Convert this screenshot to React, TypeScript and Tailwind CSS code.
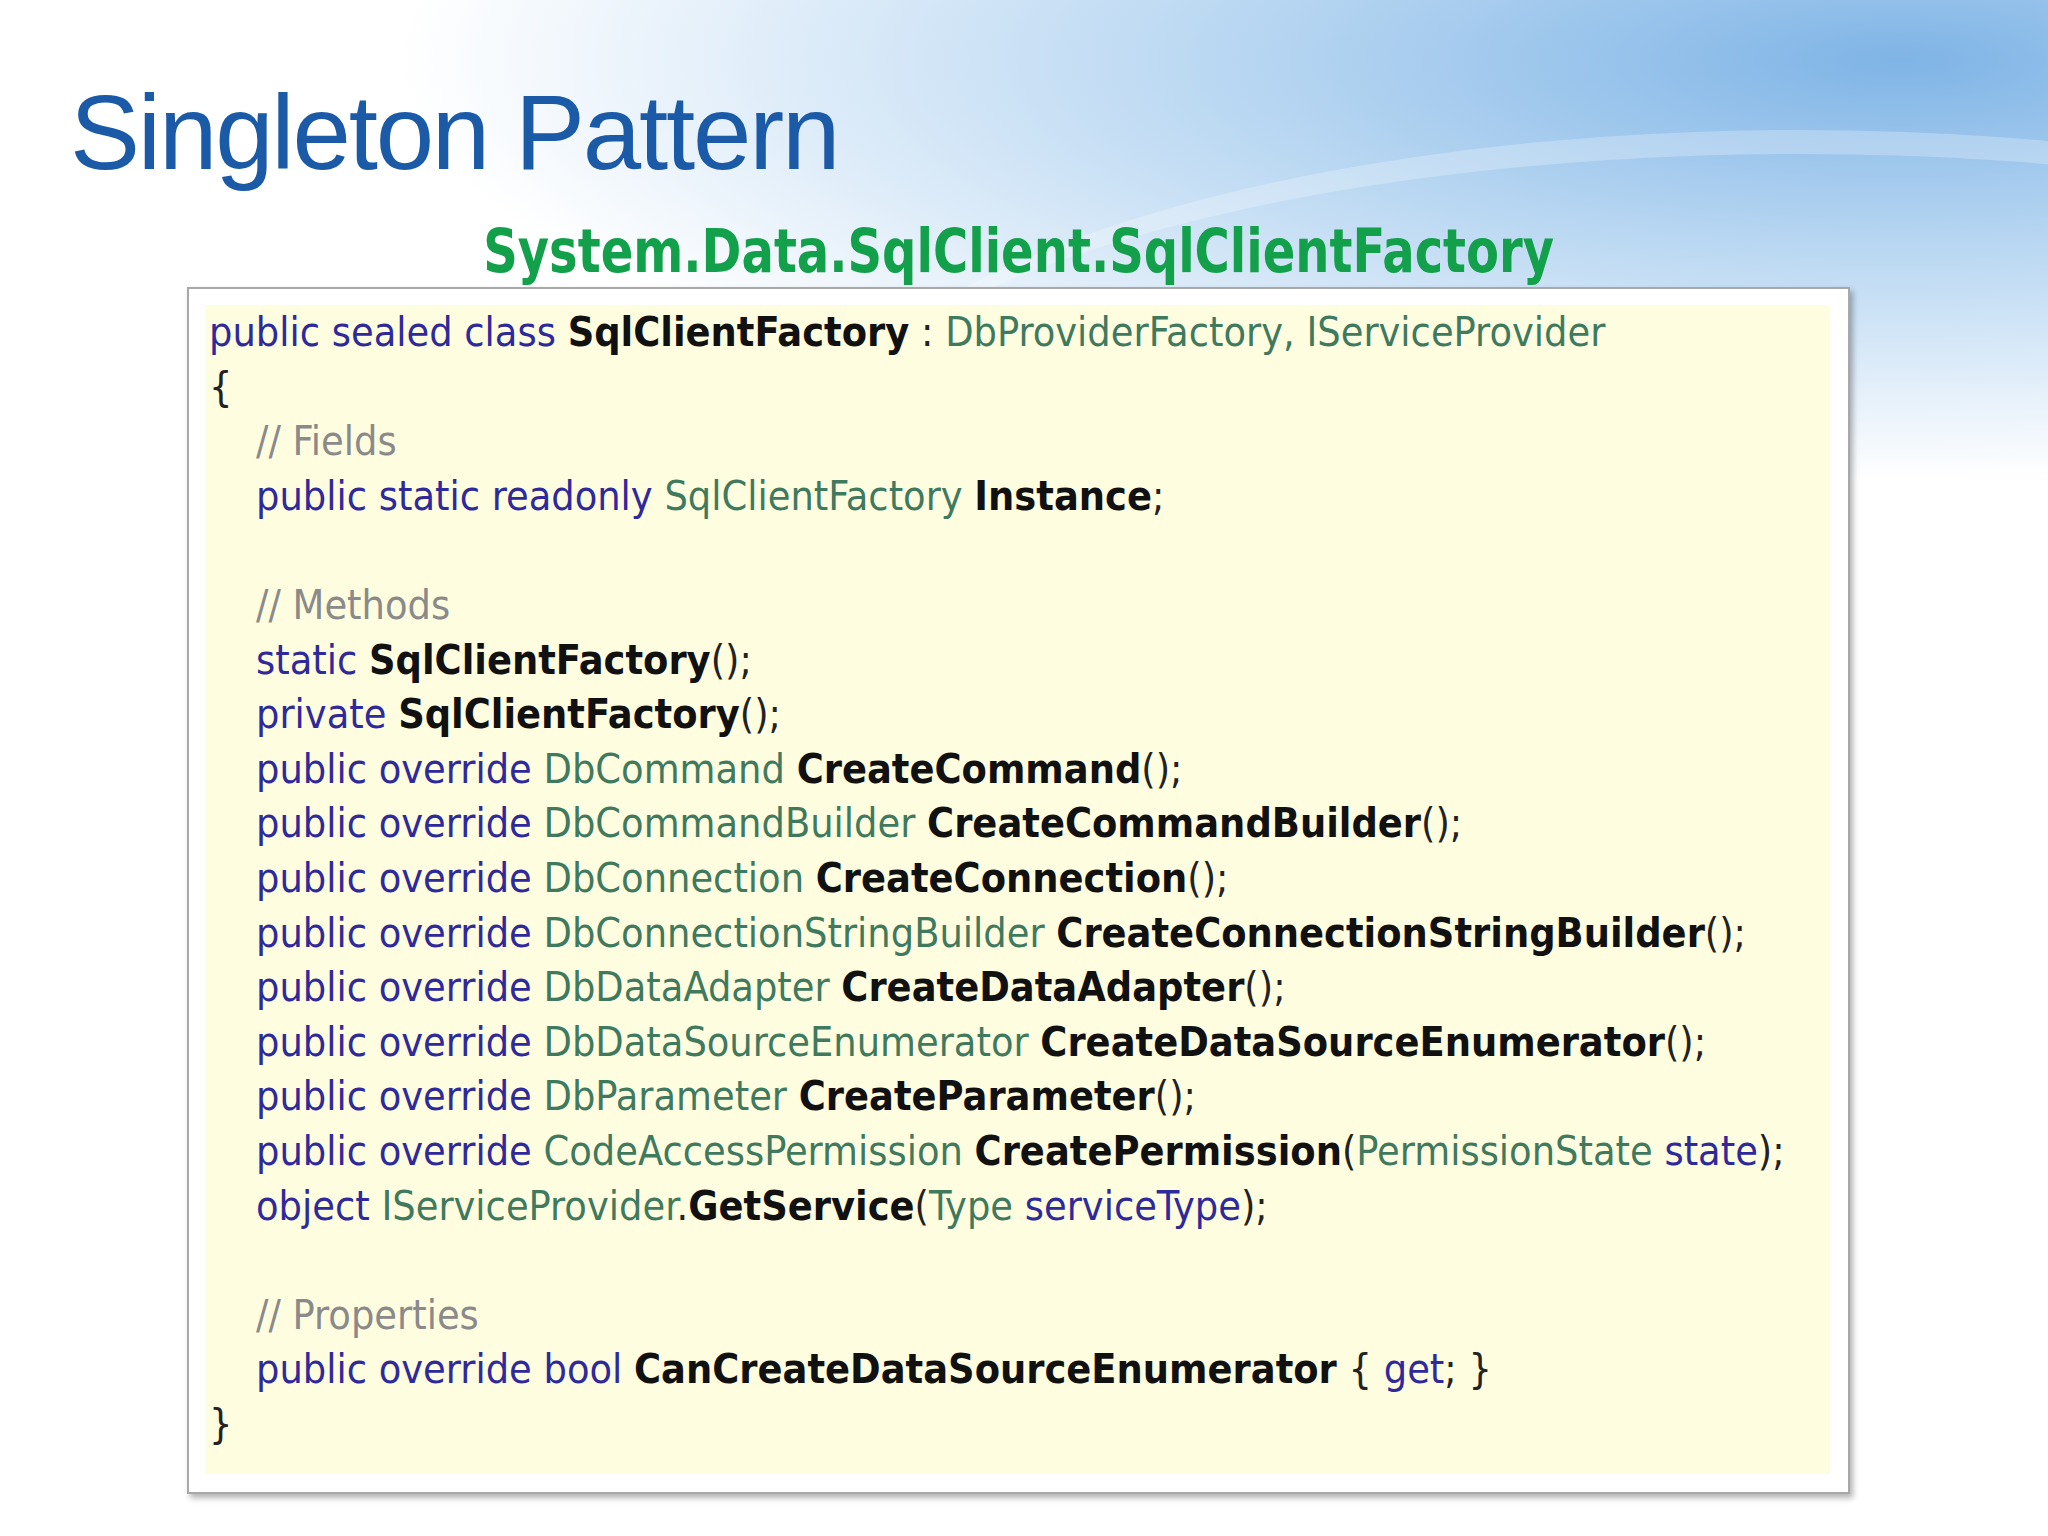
import React from "react";

type Seg = [string, string];
const K = "text-[#2e2a9c]";
const T = "text-[#3f7a5e]";
const B = "text-[#111] font-bold";
const C = "text-[#8a8a8a]";
const P = "text-[#222]";

const lines: { indent: boolean; segs: Seg[] }[] = [
  { indent: false, segs: [["public sealed class ", K], ["SqlClientFactory", B], [" : ", P], ["DbProviderFactory, IServiceProvider", T]] },
  { indent: false, segs: [["{", P]] },
  { indent: true, segs: [["// Fields", C]] },
  { indent: true, segs: [["public static readonly ", K], ["SqlClientFactory ", T], ["Instance", B], [";", P]] },
  { indent: true, segs: [] },
  { indent: true, segs: [["// Methods", C]] },
  { indent: true, segs: [["static ", K], ["SqlClientFactory", B], ["();", P]] },
  { indent: true, segs: [["private ", K], ["SqlClientFactory", B], ["();", P]] },
  { indent: true, segs: [["public override ", K], ["DbCommand ", T], ["CreateCommand", B], ["();", P]] },
  { indent: true, segs: [["public override ", K], ["DbCommandBuilder ", T], ["CreateCommandBuilder", B], ["();", P]] },
  { indent: true, segs: [["public override ", K], ["DbConnection ", T], ["CreateConnection", B], ["();", P]] },
  { indent: true, segs: [["public override ", K], ["DbConnectionStringBuilder ", T], ["CreateConnectionStringBuilder", B], ["();", P]] },
  { indent: true, segs: [["public override ", K], ["DbDataAdapter ", T], ["CreateDataAdapter", B], ["();", P]] },
  { indent: true, segs: [["public override ", K], ["DbDataSourceEnumerator ", T], ["CreateDataSourceEnumerator", B], ["();", P]] },
  { indent: true, segs: [["public override ", K], ["DbParameter ", T], ["CreateParameter", B], ["();", P]] },
  { indent: true, segs: [["public override ", K], ["CodeAccessPermission ", T], ["CreatePermission", B], ["(", P], ["PermissionState ", T], ["state", K], [");", P]] },
  { indent: true, segs: [["object ", K], ["IServiceProvider", T], [".", P], ["GetService", B], ["(", P], ["Type ", T], ["serviceType", K], [");", P]] },
  { indent: true, segs: [] },
  { indent: true, segs: [["// Properties", C]] },
  { indent: true, segs: [["public override ", K], ["bool ", K], ["CanCreateDataSourceEnumerator", B], [" { ", P], ["get", K], ["; }", P]] },
  { indent: false, segs: [["}", P]] },
];

export default function App() {
  return (
    <div className="relative w-[2048px] h-[1536px] overflow-hidden bg-white bg-[radial-gradient(ellipse_1500px_420px_at_1900px_60px,#7fb4e6_0%,#b9d7f2_45%,rgba(255,255,255,0)_100%)]">
      <div className="absolute left-[800px] top-[130px] w-[2000px] h-[700px] rounded-[50%] border-t-[24px] border-white/25 pointer-events-none" />
      <div className="relative flex flex-col">
        <h1 className="ml-[70px] mt-[80px] text-[105px] leading-none text-[#1b5aa6]" style={{ fontFamily: '"Liberation Sans", Arial, sans-serif', letterSpacing: "-2.2px" }}>
          Singleton Pattern
        </h1>
        <div className="ml-[187px] w-[1663px] flex flex-col">
          <div className="mt-[36px] text-center text-[60px] leading-none font-bold text-[#12a04a]" style={{ fontFamily: '"Liberation Sans Narrow", "DejaVu Sans Condensed", sans-serif' }}>
            <span className="inline-block scale-x-[0.89]">System.Data.SqlClient.SqlClientFactory</span>
          </div>
          <div className="mt-[6px] h-[1207px] border-2 border-[#a8a8a8] bg-white shadow-[3px_4px_6px_rgba(0,0,0,0.3)] pl-[16px] pr-[18px] pt-[16px] pb-[18px]">
            <div className="h-full bg-[#fffde0] pl-[4px] pt-0" style={{ fontFamily: '"DejaVu Sans Condensed", Tahoma, sans-serif' }}>
              {lines.map((l, i) => (
                <div key={i} className={`h-[54.6px] leading-[54.6px] text-[41px] whitespace-pre ${l.indent ? "pl-[47px]" : ""}`}>
                  {l.segs.map((s, j) => (
                    <span key={j} className={s[1]}>{s[0]}</span>
                  ))}
                </div>
              ))}
            </div>
          </div>
        </div>
      </div>
    </div>
  );
}
